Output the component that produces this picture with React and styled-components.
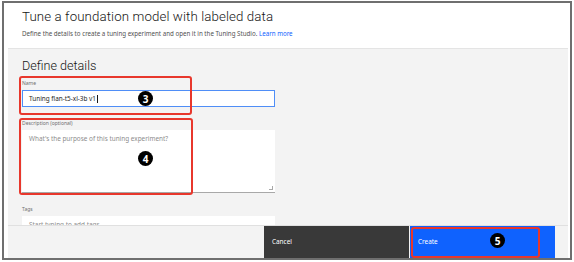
import React from 'react'
import styled, { createGlobalStyle } from 'styled-components'

const Global = createGlobalStyle`
  html, body {
    margin: 0;
    padding: 0;
    background: #ffffff;
    font-family: "Noto Sans", "Open Sans", sans-serif;
  }
`

export default function App() {
  return (
    <>
      <Global />
      <Frame>
        <Header>
          <Title>Tune a foundation model with labeled data</Title>
          <Subtitle>
            Define the details to create a tuning experiment and open it in the Tuning Studio.{' '}
            <Link>Learn more</Link>
          </Subtitle>
        </Header>
        <Panel>
          <Form>
            <Heading>Define details</Heading>
            <Field>
              <Label>Name</Label>
              <Input focused>
                Tuning flan-t5-xl-3b v1<Caret />
              </Input>
            </Field>
            <Field>
              <Label>Description (optional)</Label>
              <TextArea>
                <Placeholder>What's the purpose of this tuning experiment?</Placeholder>
                <Grip />
              </TextArea>
            </Field>
            <Field>
              <Label>Tags</Label>
              <Input>
                <Placeholder>Start typing to add tags</Placeholder>
              </Input>
            </Field>
            <Callout left={11} top={27} width={173} height={39} />
            <Callout left={11} top={69} width={174} height={77} />
            <Step left={130} top={42}>3</Step>
            <Step left={130} top={102}>4</Step>
          </Form>
          <Footer>
            <Spacer />
            <Button kind="secondary">Cancel</Button>
            <Button kind="primary">
              Create
              <Callout left={1} top={1} width={129} height={31} />
              <Step left={80} top={7}>5</Step>
            </Button>
            <Edge />
          </Footer>
        </Panel>
      </Frame>
    </>
  )
}

const Frame = styled.div`
  box-sizing: border-box;
  margin: 1px 0 0 2px;
  width: 570px;
  height: 259px;
  border: 2px solid #6f6f6f;
  background: #ffffff;
  display: flex;
  flex-direction: column;
  overflow: hidden;
`

const Header = styled.div`
  padding: 5px 0 0 18px;
  height: 40px;
  flex-shrink: 0;
`

const Title = styled.div`
  font-family: Roboto, "Noto Sans", sans-serif;
  font-size: 13.3px;
  font-weight: 300;
  color: #161616;
  line-height: 18px;
  letter-spacing: 0.1px;
`

const Subtitle = styled.div`
  margin-top: 3px;
  font-size: 6.2px;
  color: #525252;
  line-height: 9px;
`

const Link = styled.span`
  color: #0f62fe;
`

const Panel = styled.div`
  flex: 1;
  margin: 0 2px 0 4px;
  background: #f3f3f3;
  border-top: 1px solid #e4e4e4;
  display: flex;
  flex-direction: column;
  min-height: 0;
`

const Form = styled.div`
  position: relative;
  flex: 1;
  min-height: 0;
  overflow: hidden;
  padding: 8px 0 0 14px;
`

const Heading = styled.div`
  font-family: Roboto, "Noto Sans", sans-serif;
  font-size: 12.6px;
  font-weight: 300;
  color: #161616;
  line-height: 18px;
  margin-bottom: 5px;
`

const Field = styled.div`
  width: 253px;
  margin-bottom: 13px;
`

const Label = styled.div`
  font-size: 5px;
  color: #6f6f6f;
  line-height: 7px;
  margin-bottom: 3px;
`

const Input = styled.div`
  box-sizing: border-box;
  height: 17px;
  background: #ffffff;
  border: ${p => (p.focused ? '1.5px solid #4f8ef7' : '0')};
  padding: 0 ${p => (p.focused ? '6px' : '7px')};
  display: flex;
  align-items: center;
  font-size: 6.4px;
  color: #262626;
`

const Caret = styled.span`
  display: inline-block;
  width: 0.7px;
  height: 8px;
  background: #161616;
  margin-left: 0.5px;
`

const TextArea = styled.div`
  position: relative;
  box-sizing: border-box;
  height: 63px;
  background: #ffffff;
  border-bottom: 1px solid #a8a8a8;
  padding: 4px 7px;
  font-size: 6.4px;
`

const Placeholder = styled.span`
  color: #8d8d8d;
  font-size: 6.4px;
`

const Grip = styled.div`
  position: absolute;
  right: 2px;
  bottom: 2px;
  width: 3px;
  height: 3px;
  border-right: 1px solid #a8a8a8;
  border-bottom: 1px solid #a8a8a8;
`

const Callout = styled.div`
  position: absolute;
  left: ${p => p.left}px;
  top: ${p => p.top}px;
  width: ${p => p.width}px;
  height: ${p => p.height}px;
  box-sizing: border-box;
  border: 2px solid #e8372c;
  border-radius: 3px;
  pointer-events: none;
`

const Step = styled.div`
  position: absolute;
  left: ${p => p.left}px;
  top: ${p => p.top}px;
  width: 15px;
  height: 15px;
  border-radius: 50%;
  background: #000000;
  color: #ffffff;
  font-size: 10px;
  font-weight: 700;
  display: flex;
  align-items: center;
  justify-content: center;
  line-height: 1;
`

const Footer = styled.div`
  height: 32px;
  flex-shrink: 0;
  display: flex;
  border-top: 1px solid #e0e0e0;
  background: #f3f3f3;
`

const Spacer = styled.div`
  width: 256px;
`

const Button = styled.div`
  position: relative;
  box-sizing: border-box;
  width: 145px;
  margin-left: ${p => (p.kind === 'primary' ? '1px' : '0')};
  background: ${p => (p.kind === 'primary' ? '#0f62fe' : '#393939')};
  color: #ffffff;
  font-size: 6.4px;
  padding: 11px 0 0 8px;
`

const Edge = styled.div`
  flex: 1;
`
